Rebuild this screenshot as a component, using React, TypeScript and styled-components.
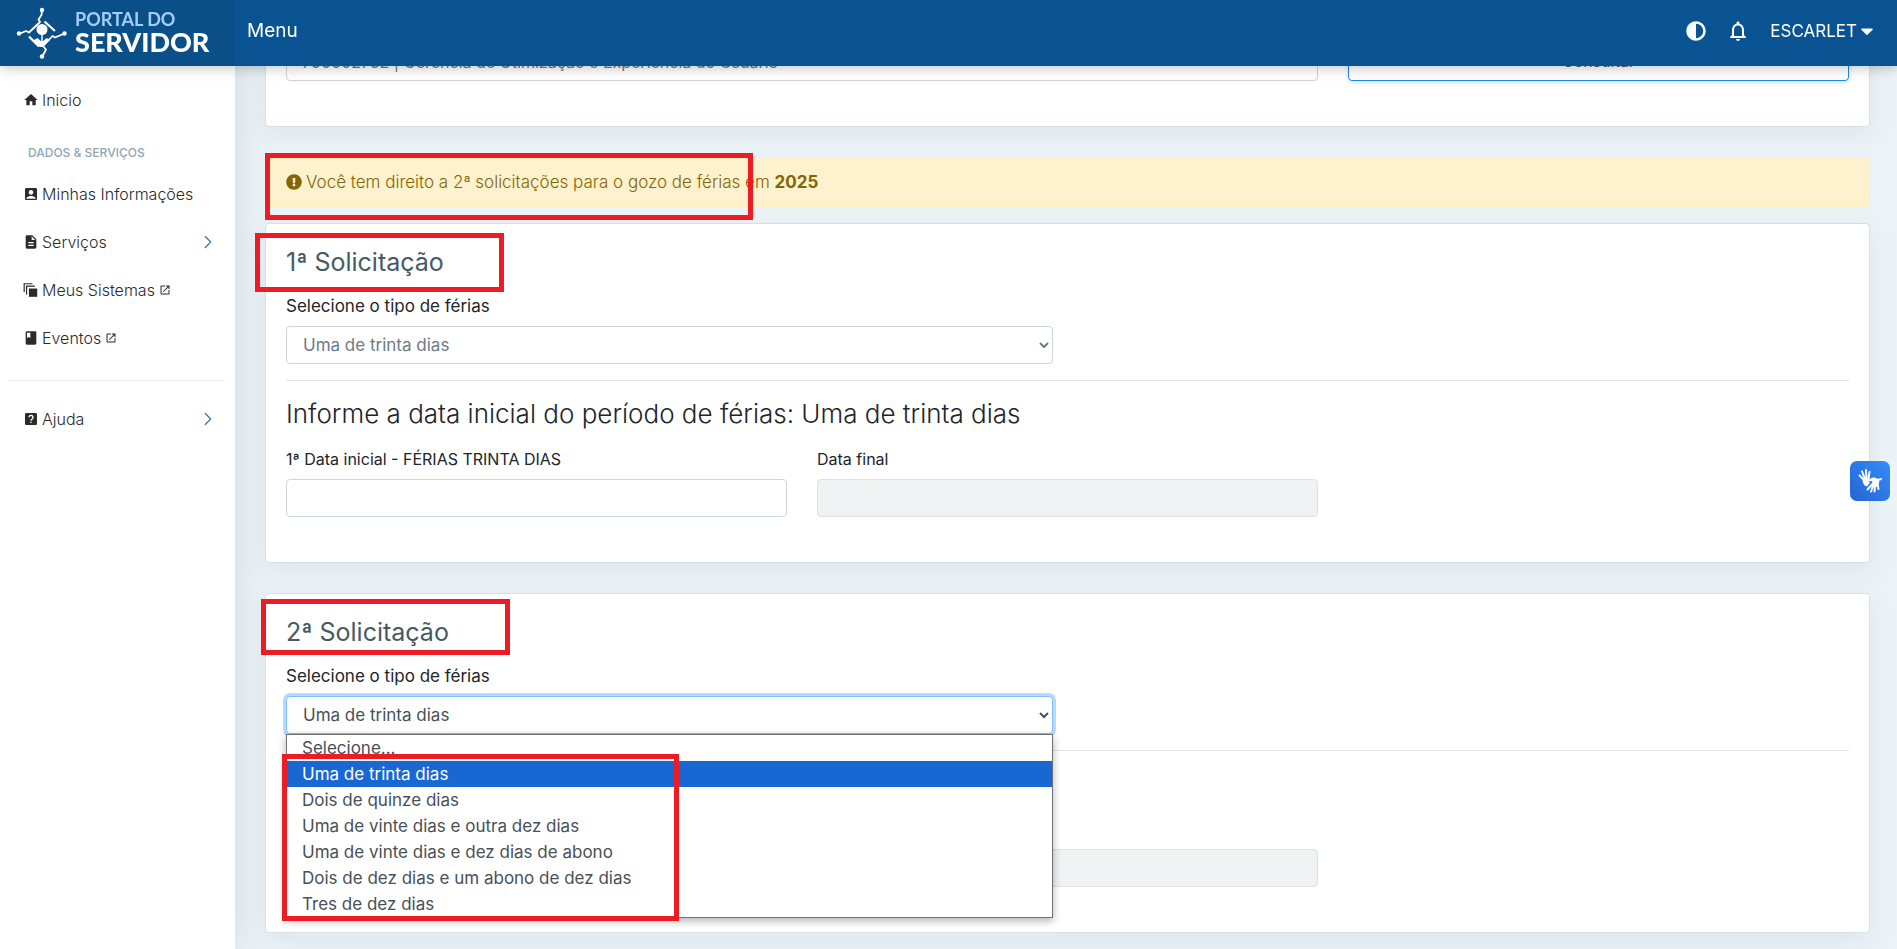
import React from 'react';
import styled, { createGlobalStyle, css } from 'styled-components';
import { FaAdjust, FaCaretDown, FaExclamationCircle } from 'react-icons/fa';
import { FiChevronRight } from 'react-icons/fi';
import {
  MdAccountBox,
  MdBook,
  MdDescription,
  MdHome,
  MdNotificationsNone,
  MdOpenInNew,
} from 'react-icons/md';

const GlobalStyle = createGlobalStyle`
  *, *::before, *::after { box-sizing: border-box; }
  body {
    margin: 0;
    background: #ebf3f7;
    color: #212529;
    font-family: Inter, "Open Sans", sans-serif;
    font-size: 17px;
    line-height: 24px;
  }
  h2, h3, p, ul { margin: 0; padding: 0; }
  ul { list-style: none; }
`;

/* ---------- header ---------- */

const Header = styled.header`
  position: fixed;
  top: 0;
  left: 0;
  right: 0;
  z-index: 10;
  display: flex;
  align-items: stretch;
  height: 66px;
  background: #095393;
  box-shadow: 0 0 14px rgba(0, 0, 0, 0.3);
`;

const Brand = styled.a`
  display: flex;
  align-items: center;
  gap: 7px;
  width: 235px;
  padding-left: 16px;
  background: #0b4f89;
  color: #fff;
  text-decoration: none;
`;

const BrandName = styled.span`
  display: flex;
  flex-direction: column;
  font-family: Lato, sans-serif;
`;

const BrandTop = styled.span`
  color: #a5cdfb;
  font-size: 18px;
  font-weight: 700;
  line-height: 18px;
`;

const BrandBottom = styled.span`
  font-size: 27px;
  font-weight: 900;
  line-height: 28px;
`;

const MenuButton = styled.button`
  padding: 0 12px 4px;
  border: 0;
  background: none;
  color: #fff;
  font: inherit;
  font-size: 19px;
  cursor: pointer;
`;

const Tools = styled.div`
  display: flex;
  align-items: center;
  gap: 20px;
  margin-left: auto;
  padding: 0 20px 5px 0;
`;

const ToolButton = styled.button`
  display: flex;
  align-items: center;
  padding: 0;
  border: 0;
  background: none;
  color: #fff;
  font: inherit;
  cursor: pointer;
`;

/* ---------- sidebar ---------- */

const Shell = styled.div`
  display: flex;
  min-height: 100vh;
`;

const Sidebar = styled.nav`
  flex: 0 0 235px;
  padding: 76px 10px 0 8px;
  background: #fff;
  box-shadow: 0 0 35px rgba(100, 115, 130, 0.2);
`;

const NavLink = styled.a`
  display: flex;
  align-items: center;
  height: 48px;
  padding: 0 6px 0 15px;
  color: #2b2b2b;
  font-size: 16px;
  font-weight: 300;
  text-decoration: none;

  > svg { flex: none; }
  > svg:first-child { margin-right: 3px; }
`;

const ExternalMark = styled(MdOpenInNew)`
  margin-left: 4px;
`;

const Chevron = styled(FiChevronRight)`
  margin-left: auto;
  color: #4b7a92;
`;

const NavCaption = styled.h2`
  padding: 17px 0 5px 20px;
  color: #8fa5b5;
  font-size: 12px;
  font-weight: 500;
`;

const NavRule = styled.hr`
  height: 1px;
  margin: 18px 0 14px;
  border: 0;
  background: #e9ebed;
`;

/* ---------- content ---------- */

const Main = styled.main`
  flex: 1;
  min-width: 0;
  padding: 0 27px 16px 30px;
`;

const Card = styled.section`
  padding: 20px 20px 45px;
  border: 1px solid #d8e0e4;
  border-radius: 4px;
  background: #fff;
  box-shadow: 0 8px 24px rgba(130, 140, 155, 0.12);

  & + & { margin-top: 30px; }
`;

const SearchCard = styled(Card)`
  padding-top: 42px;
`;

const Columns = styled.div`
  display: grid;
  grid-template-columns: repeat(3, minmax(0, 1fr));
  gap: 30px;
`;

const Wide = styled.div`
  grid-column: span 2;
`;

const Half = styled.div`
  position: relative;
  width: calc(50% - 15px);
`;

const Label = styled.label<{ $small?: boolean }>`
  display: block;
  margin-bottom: 8px;
  font-size: ${(p) => (p.$small ? 16 : 17)}px;
`;

const control = css`
  display: block;
  width: 100%;
  height: 38px;
  border: 1px solid #ced4da;
  border-radius: 4px;
  background: #fff;
  color: #6c7a86;
  font: inherit;
`;

const Input = styled.input`
  ${control}
  padding: 6px 15px;
  font-size: 16px;

  &:disabled { background: #f0f1f3; border-color: #dfe2e6; }
`;

const Select = styled.select<{ $open?: boolean }>`
  ${control}
  padding: 6px 0 6px 12px;

  ${(p) =>
    p.$open &&
    css`
      border-color: #80bdff;
      box-shadow: 0 0 0 3px rgba(0, 123, 255, 0.28);
      color: #495057;
    `}
`;

const ConsultButton = styled.button`
  height: 38px;
  padding: 0 0 2px;
  border: 1px solid #1e88e5;
  border-radius: 4px;
  background: #fff;
  box-shadow: 0 2px 4px rgba(30, 136, 229, 0.2);
  color: #4f5d6b;
  font: inherit;
  font-size: 16px;
`;

const Alert = styled.div`
  position: relative;
  display: flex;
  align-items: center;
  gap: 4px;
  height: 50px;
  margin: 30px 0 16px;
  padding: 0 20px;
  border: 1px solid #ffeeba;
  border-radius: 4px;
  background: #fef1cd;
  color: #856404;
  font-weight: 300;

  strong { font-weight: 700; }
`;

const Title = styled.h2`
  position: relative;
  margin-bottom: 14px;
  color: #455a64;
  font-size: 25px;
  font-weight: 400;
  line-height: 36px;
`;

const Rule = styled.hr`
  height: 1px;
  margin: 16px 0;
  border: 0;
  background: #e1e4e6;
`;

const Subtitle = styled.h3`
  margin-bottom: 16px;
  font-size: 26px;
  font-weight: 300;
  line-height: 34px;
`;

/* ---------- open drop-down ---------- */

const Options = styled.ul`
  position: absolute;
  top: 100%;
  left: 0;
  right: 0;
  z-index: 2;
  border: 1px solid #6f7173;
  background: #fff;
  box-shadow: 0 3px 8px rgba(0, 0, 0, 0.3);
  color: #495057;
  line-height: 26px;
`;

const Option = styled.li<{ $active: boolean }>`
  padding: 0 15px;
  ${(p) => p.$active && 'background: #1967d2; color: #fff;'}
`;

/* Red marker frames laid over the page */
const frames = {
  alert: css`top: -5px; left: -1px; width: 488px; height: 67px;`,
  first: css`top: -11px; left: -31px; width: 249px; height: 59px;`,
  second: css`top: -15px; left: -25px; width: 249px; height: 56px;`,
  options: css`top: 19px; left: -5px; width: 397px; height: 167px;`,
};

const Frame = styled.span<{ $at: keyof typeof frames }>`
  position: absolute;
  z-index: 3;
  border: 5px solid #ed1c24;
  pointer-events: none;
  ${(p) => frames[p.$at]}
`;

const LibrasButton = styled.button`
  position: fixed;
  top: 461px;
  right: 7px;
  z-index: 5;
  display: grid;
  place-items: center;
  width: 40px;
  height: 40px;
  padding: 0;
  border: 0;
  border-radius: 7px;
  background: linear-gradient(45deg, #2464d2, #348df9);
`;

/* ---------- drawings ---------- */

const Logo = () => (
  <svg width="52" height="52" viewBox="0 0 52 52" aria-hidden="true">
    <g fill="none" stroke="#fff" strokeWidth="1.8" strokeLinejoin="round">
      <path d="M26 3 L25.5 8 L22.5 12.500 L24 15 L13 25.500 L10 24 L3 27" />
      <path d="M28.500 14.500 L39 24" strokeWidth="2.200" />
      <path d="M13 29.500 L23 39.500" strokeWidth="2.200" />
      <path d="M48.500 26.500 L39 30.500 L36.500 29 L27 39 L30 42.500 L26 50" />
    </g>
    <g fill="#fff">
      <circle cx="26" cy="3" r="2.200" />
      <circle cx="3" cy="26.500" r="2.200" />
      <circle cx="48.500" cy="26.500" r="2.200" />
      <circle cx="26" cy="49.500" r="2.200" />
      <circle cx="26" cy="22.500" r="5.500" />
      <path d="M14.500 31 L18 33 L21.500 31 L25.300 34.500 V27 H26.700 V34.500 L30.500 31 L34 33 L37 30 L27 40 H24 Z" />
    </g>
  </svg>
);

const StackIcon = () => (
  <svg width="16" height="16" viewBox="0 -1 27 27" aria-hidden="true">
    <path d="M10 10h14v14H10z" fill="#2b2b2b" />
    <path d="M6 20V6h14M2 16V2h14" fill="none" stroke="#2b2b2b" strokeWidth="2" />
  </svg>
);

const HelpBoxIcon = () => (
  <svg width="16" height="16" viewBox="0 0 24 24" aria-hidden="true">
    <rect x="3" y="3" width="18" height="18" rx="2" fill="#2b2b2b" />
    <path
      d="M9 9.500a3 3 0 1 1 4.500 2.600c-1 .6-1.500 1-1.500 2.400"
      fill="none"
      stroke="#fff"
      strokeWidth="2"
    />
    <path d="M11 16h2v2h-2z" fill="#fff" />
  </svg>
);

const HandsIcon = () => (
  <svg width="26" height="26" viewBox="0 0 26 26" aria-hidden="true">
    <g fill="none" stroke="#fff" strokeLinecap="round" strokeWidth="2">
      <path d="M7 12 L2.500 7.500M8 11 L5 3.500M9.500 11 L9 2M11.500 11 L12.500 4" />
      <path d="M18 18 L17.500 23.500M16 18 L14 23.500M14.500 17 L10.500 21.500M20.500 16 L21.500 21" />
      <path d="M15 12 L9.500 12.500M21 12 L24 11" />
    </g>
    <path d="M5.500 12 L12 9.500 L11 12 L9 13 L13 14 L10.500 18 C8 19 6 16 5.500 12Z" fill="#fff" />
    <path d="M13 11 C16 8.500 20 9.500 22 12 C23 15 21 17.500 19 19 L13.500 17.500 L15.500 14Z" fill="#fff" />
  </svg>
);

/* ---------- page ---------- */

const choices = [
  'Uma de trinta dias',
  'Dois de quinze dias',
  'Uma de vinte dias e outra dez dias',
  'Uma de vinte dias e dez dias de abono',
  'Dois de dez dias e um abono de dez dias',
  'Tres de dez dias',
];

interface RequestProps {
  n: number;
  frame: 'first' | 'second';
  open?: boolean;
}

const Request = ({ n, frame, open }: RequestProps) => (
  <Card>
    <Title>
      {n}ª Solicitação
      <Frame $at={frame} />
    </Title>
    <Half>
      <Label htmlFor={`tipo-${n}`}>Selecione o tipo de férias</Label>
      <Select id={`tipo-${n}`} defaultValue={choices[0]} $open={open}>
        {choices.map((c) => (
          <option key={c}>{c}</option>
        ))}
      </Select>
      {open && (
        <Options role="listbox" aria-label="Tipo de férias">
          {['Selecione...', ...choices].map((c) => (
            <Option key={c} role="option" aria-selected={c === choices[0]} $active={c === choices[0]}>
              {c}
            </Option>
          ))}
          <Frame $at="options" />
        </Options>
      )}
    </Half>
    <Rule />
    <Subtitle>Informe a data inicial do período de férias: {choices[0]}</Subtitle>
    <Columns>
      <div>
        <Label $small htmlFor={`inicio-${n}`}>1ª Data inicial - FÉRIAS TRINTA DIAS</Label>
        <Input id={`inicio-${n}`} />
      </div>
      <div>
        <Label $small htmlFor={`fim-${n}`}>Data final</Label>
        <Input id={`fim-${n}`} disabled />
      </div>
    </Columns>
  </Card>
);

export default function App() {
  return (
    <>
      <GlobalStyle />
      <Header>
        <Brand href="#">
          <Logo />
          <BrandName>
            <BrandTop>PORTAL DO</BrandTop>
            <BrandBottom>SERVIDOR</BrandBottom>
          </BrandName>
        </Brand>
        <MenuButton type="button">Menu</MenuButton>
        <Tools>
          <ToolButton type="button" aria-label="Contraste">
            <FaAdjust size={20} />
          </ToolButton>
          <ToolButton type="button" aria-label="Notificações">
            <MdNotificationsNone size={24} />
          </ToolButton>
          <ToolButton type="button">
            ESCARLET <FaCaretDown size={20} />
          </ToolButton>
        </Tools>
      </Header>
      <Shell>
        <Sidebar>
          <NavLink href="#"><MdHome size={16} />Inicio</NavLink>
          <NavCaption>DADOS &amp; SERVIÇOS</NavCaption>
          <NavLink href="#"><MdAccountBox size={16} />Minhas Informações</NavLink>
          <NavLink href="#"><MdDescription size={16} />Serviços<Chevron size={22} strokeWidth={1.5} /></NavLink>
          <NavLink href="#"><StackIcon />Meus Sistemas<ExternalMark size={12} /></NavLink>
          <NavLink href="#"><MdBook size={16} />Eventos<ExternalMark size={12} /></NavLink>
          <NavRule />
          <NavLink href="#"><HelpBoxIcon />Ajuda<Chevron size={22} strokeWidth={1.5} /></NavLink>
        </Sidebar>
        <Main>
          <SearchCard>
            <Columns>
              <Wide>
                <Input
                  aria-label="Setor"
                  defaultValue="700002732 | Gerência de Otimização e Experiência do Usuário"
                />
              </Wide>
              <ConsultButton type="button">Consultar</ConsultButton>
            </Columns>
          </SearchCard>
          <Alert role="alert">
            <FaExclamationCircle size={16} />
            <p>
              Você tem direito a 2ª solicitações para o gozo de férias em <strong>2025</strong>
            </p>
            <Frame $at="alert" />
          </Alert>
          <Request n={1} frame="first" />
          <Request n={2} frame="second" open />
        </Main>
      </Shell>
      <LibrasButton type="button" aria-label="Libras">
        <HandsIcon />
      </LibrasButton>
    </>
  );
}
